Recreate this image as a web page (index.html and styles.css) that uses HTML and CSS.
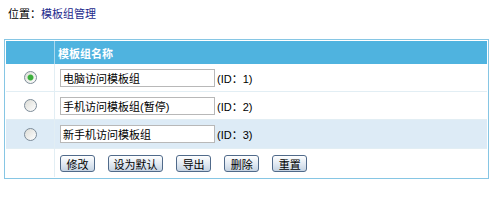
FILE: index.html
```html
<!DOCTYPE html>
<html lang="zh-CN">
<head>
    <meta charset="UTF-8">
    <title>模板组管理</title>
    <link rel="stylesheet" href="styles.css">
</head>
<body>
    <div class="location">位置：<a href="#">模板组管理</a></div>
    <form class="tpl-form">
        <table class="list-table">
            <tr class="head">
                <td class="col-check"></td>
                <td>模板组名称</td>
            </tr>
            <tr>
                <td class="col-check"><input type="radio" name="tpl" value="1" checked></td>
                <td><input type="text" class="name-input" value="电脑访问模板组"><span class="tpl-id">(ID：1)</span></td>
            </tr>
            <tr>
                <td class="col-check"><input type="radio" name="tpl" value="2"></td>
                <td><input type="text" class="name-input" value="手机访问模板组(暂停)"><span class="tpl-id">(ID：2)</span></td>
            </tr>
            <tr class="alt">
                <td class="col-check"><input type="radio" name="tpl" value="3"></td>
                <td><input type="text" class="name-input" value="新手机访问模板组"><span class="tpl-id">(ID：3)</span></td>
            </tr>
            <tr class="actions">
                <td class="col-check"></td>
                <td>
                    <button type="button" class="btn">修改</button>
                    <button type="button" class="btn btn-wide">设为默认</button>
                    <button type="button" class="btn">导出</button>
                    <button type="button" class="btn">删除</button>
                    <button type="button" class="btn">重置</button>
                </td>
            </tr>
        </table>
    </form>
</body>
</html>
```

FILE: styles.css
```css
body {
    margin: 0;
    font-family: "Liberation Sans", "Noto Sans CJK SC", sans-serif;
    font-size: 11px;
    color: #000;
    background: #fff;
}
.location {
    padding: 7px 0 0 8px;
    height: 39px;
    box-sizing: border-box;
    line-height: 14px;
}
.location a {
    color: #1c2a8c;
    text-decoration: none;
}
.tpl-form {
    margin: 0;
}
.list-table {
    margin-left: 4px;
    width: 485px;
    border: 1px solid #86c6e4;
    border-collapse: separate;
    border-spacing: 0;
    padding: 1px;
}
.list-table td {
    padding: 0 0 0 5px;
    height: 28px;
    box-sizing: border-box;
    border-bottom: 1px solid #e2eef4;
    vertical-align: middle;
}
.list-table td.col-check {
    width: 49px;
    padding: 0;
    text-align: center;
    border-right: 1px solid #e2eef4;
}
.list-table tr.head td {
    background: #4fb3df;
    color: #fff;
    font-weight: bold;
    height: 23px;
    padding-left: 3px;
    border-bottom: 0;
    border-right-color: #a9d8ee;
}
.list-table tr.alt td {
    background: #ddebf6;
    height: 29px;
}
.list-table tr.actions td {
    border-bottom: 0;
    height: 28px;
}
.col-check input {
    appearance: none;
    margin: 0;
    width: 13px;
    height: 13px;
    border: 1px solid #7d8c99;
    border-radius: 50%;
    background: linear-gradient(135deg, #dcdcd6, #ffffff);
    vertical-align: middle;
}
.col-check input:checked {
    background: radial-gradient(circle, #3dae3d 0 2.5px, #9ad69a 3px, transparent 3.5px),
        linear-gradient(135deg, #dcdcd6, #ffffff);
}
.name-input {
    width: 155px;
    height: 18px;
    box-sizing: border-box;
    border: 1px solid #b8b8b8;
    padding: 1px 2px;
    font-family: inherit;
    font-size: 11px;
    vertical-align: middle;
}
.tpl-id {
    margin-left: 2px;
    vertical-align: middle;
}
.btn {
    width: 35px;
    height: 17px;
    padding: 0;
    margin-right: 10px;
    font-family: inherit;
    font-size: 11px;
    color: #000;
    border: 1px solid #506a8a;
    border-radius: 3px;
    background: linear-gradient(#ffffff, #dde6f0 60%, #c5d3e2);
    vertical-align: middle;
    cursor: pointer;
}
.btn-wide {
    width: 55px;
}
```
